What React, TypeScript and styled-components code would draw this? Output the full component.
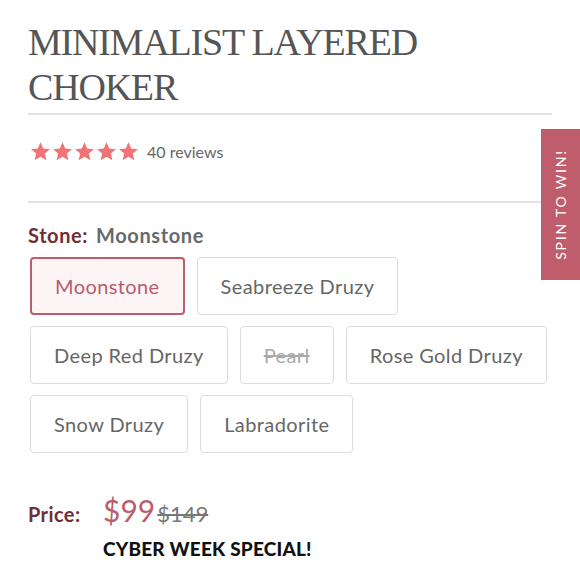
import React from "react";
import styled, { createGlobalStyle } from "styled-components";

const Global = createGlobalStyle`
  html, body { margin: 0; padding: 0; background: #fff; }
  body { font-family: "Lato", "Noto Sans", sans-serif; }
`;

const Page = styled.div`
  position: relative;
  width: 580px;
  height: 580px;
  overflow: hidden;
  box-sizing: border-box;
  padding: 20px 0 0 28px;
  background: #fff;
`;

const Title = styled.h1`
  margin: 0;
  font-family: "Liberation Serif", "DejaVu Serif", serif;
  font-weight: 400;
  font-size: 38px;
  line-height: 45px;
  letter-spacing: -1.2px;
  color: #555;
`;

const Divider = styled.div<{ $width: number; $top: number }>`
  width: ${(p) => p.$width}px;
  margin-top: ${(p) => p.$top}px;
  border-top: 2px solid #e2e2e2;
`;

const RatingRow = styled.div`
  display: flex;
  align-items: center;
  gap: 8px;
  margin-top: 25px;
  height: 22px;
`;

const Stars = styled.div`
  display: flex;
  gap: 1px;
  padding-left: 2px;
`;

const Reviews = styled.span`
  font-size: 16px;
  color: #666;
`;

const StoneLabel = styled.div`
  margin-top: 20px;
  font-size: 20px;
  line-height: 24px;
  font-weight: 700;
  letter-spacing: 0.6px;
  color: #6e2f37;
  display: flex;
  gap: 8px;
`;

const StoneValue = styled.span`
  color: #666a6e;
`;

const Options = styled.div`
  display: flex;
  flex-wrap: wrap;
  gap: 11px 12px;
  width: 530px;
  margin-top: 10px;
  padding-left: 2px;
`;

const Option = styled.button<{ $selected?: boolean; $disabled?: boolean }>`
  height: 58px;
  box-sizing: border-box;
  padding: 0 23px;
  border-radius: 4px;
  border: ${(p) => (p.$selected ? "2px solid #bb5d6c" : "1.5px solid #dcdcdc")};
  background: ${(p) => (p.$selected ? "#fdf4f5" : "#fff")};
  color: ${(p) => (p.$selected ? "#b85c6b" : p.$disabled ? "#aaa" : "#666")};
  text-decoration: ${(p) => (p.$disabled ? "line-through" : "none")};
  font-family: "Lato", "Noto Sans", sans-serif;
  font-size: 20px;
  letter-spacing: 0.4px;
  cursor: pointer;
`;

const PriceRow = styled.div`
  display: flex;
  align-items: baseline;
  margin-top: 39px;
`;

const PriceLabel = styled.span`
  width: 75px;
  font-size: 20px;
  font-weight: 700;
  letter-spacing: 0.4px;
  color: #6e2f37;
`;

const Now = styled.span`
  font-size: 30px;
  line-height: 36px;
  color: #bb5d6c;
`;

const Was = styled.span`
  font-size: 22px;
  color: #777;
  text-decoration: line-through;
  margin-left: 2px;
`;

const Special = styled.div`
  margin: 9px 0 0 75px;
  font-size: 19px;
  line-height: 23px;
  font-weight: 900;
  letter-spacing: 0.2px;
  color: #111;
`;

const SpinTab = styled.div`
  position: absolute;
  right: 0;
  top: 129px;
  width: 39px;
  height: 151px;
  background: #c05d6d;
  display: flex;
  align-items: center;
  justify-content: center;
`;

const SpinText = styled.span`
  transform: rotate(-90deg);
  white-space: nowrap;
  color: #fff;
  font-size: 14px;
  letter-spacing: 1.8px;
`;

const Star = () => (
  <svg width="21" height="21" viewBox="0 0 24 24">
    <path
      d="M12 1.5l3.1 7.1 7.7.7-5.8 5.1 1.7 7.6L12 18l-6.7 4 1.7-7.6-5.8-5.1 7.7-.7z"
      fill="#f07377"
    />
  </svg>
);

const options = [
  { name: "Moonstone", selected: true },
  { name: "Seabreeze Druzy" },
  { name: "Deep Red Druzy" },
  { name: "Pearl", disabled: true },
  { name: "Rose Gold Druzy" },
  { name: "Snow Druzy" },
  { name: "Labradorite" },
];

export default function App() {
  return (
    <>
      <Global />
      <Page>
        <Title>
          MINIMALIST LAYERED
          <br />
          CHOKER
        </Title>
        <Divider $width={524} $top={3} />
        <RatingRow>
          <Stars>
            {[0, 1, 2, 3, 4].map((i) => (
              <Star key={i} />
            ))}
          </Stars>
          <Reviews>40 reviews</Reviews>
        </RatingRow>
        <Divider $width={513} $top={39} />
        <StoneLabel>
          Stone: <StoneValue>Moonstone</StoneValue>
        </StoneLabel>
        <Options>
          {options.map((o) => (
            <Option key={o.name} $selected={o.selected} $disabled={o.disabled}>
              {o.name}
            </Option>
          ))}
        </Options>
        <PriceRow>
          <PriceLabel>Price:</PriceLabel>
          <Now>$99</Now>
          <Was>$149</Was>
        </PriceRow>
        <Special>CYBER WEEK SPECIAL!</Special>
        <SpinTab>
          <SpinText>SPIN TO WIN!</SpinText>
        </SpinTab>
      </Page>
    </>
  );
}
